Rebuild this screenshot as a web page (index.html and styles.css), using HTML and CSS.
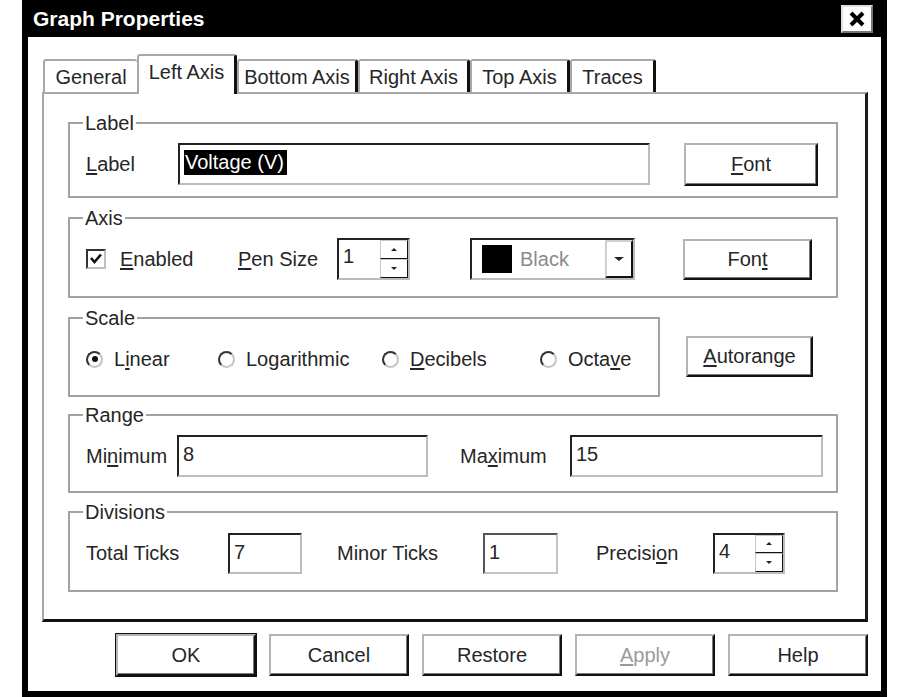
FILE: index.html
```html
<!DOCTYPE html>
<html lang="en">
<head>
  <meta charset="UTF-8" />
  <title>Graph Properties</title>
  <link rel="stylesheet" href="styles.css">
</head>
<body>
  <div class="window">
    <div class="titlebar">
      <span class="title">Graph Properties</span>
      <button class="close" aria-label="Close">
        <svg width="18" height="16" viewBox="0 0 18 16">
          <path d="M3 2 L15 14 M15 2 L3 14" stroke="#000" stroke-width="4" fill="none"/>
        </svg>
      </button>
    </div>

    <div class="content">
      <div class="tabs">
        <div class="tab tab-general">General</div>
        <div class="tab tab-left active">Left Axis</div>
        <div class="tab tab-bottom">Bottom Axis</div>
        <div class="tab tab-right">Right Axis</div>
        <div class="tab tab-top">Top Axis</div>
        <div class="tab tab-traces">Traces</div>
      </div>

      <div class="panel">
        <fieldset class="group group-label">
          <legend>Label</legend>
          <div class="row">
            <span class="lbl w-label"><u>L</u>abel</span>
            <div class="field field-label"><span class="selected">Voltage (V)</span></div>
            <button class="btn btn-font1"><u>F</u>ont</button>
          </div>
        </fieldset>

        <fieldset class="group group-axis">
          <legend>Axis</legend>
          <div class="row">
            <span class="check">
              <svg width="14" height="14" viewBox="0 0 14 14">
                <path d="M2 6 L5.5 10 L12 2.5" stroke="#111" stroke-width="2.6" fill="none"/>
              </svg>
            </span>
            <span class="lbl w-enabled"><u>E</u>nabled</span>
            <span class="lbl w-pen"><u>P</u>en Size</span>
            <div class="spin spin-pen">
              <span class="spin-text">1</span>
              <span class="spin-btns">
                <span class="spin-btn"><i class="arr-up"></i></span>
                <span class="spin-btn"><i class="arr-down"></i></span>
              </span>
            </div>
            <div class="combo">
              <span class="swatch"></span>
              <span class="combo-text">Black</span>
              <span class="drop"><i class="arr-drop"></i></span>
            </div>
            <button class="btn btn-font2">Fon<u>t</u></button>
          </div>
        </fieldset>

        <div class="scale-row">
          <fieldset class="group group-scale">
            <legend>Scale</legend>
            <div class="row">
              <span class="opt w-linear"><span class="radio on"></span>L<u>i</u>near</span>
              <span class="opt w-log"><span class="radio"></span>Lo<u>g</u>arithmic</span>
              <span class="opt w-dec"><span class="radio"></span><u>D</u>ecibels</span>
              <span class="opt"><span class="radio"></span>Octa<u>v</u>e</span>
            </div>
          </fieldset>
          <button class="btn btn-auto"><u>A</u>utorange</button>
        </div>

        <fieldset class="group group-range">
          <legend>Range</legend>
          <div class="row">
            <span class="lbl w-min">Mi<u>n</u>imum</span>
            <div class="field field-min">8</div>
            <span class="lbl w-max">Ma<u>x</u>imum</span>
            <div class="field field-max">15</div>
          </div>
        </fieldset>

        <fieldset class="group group-div">
          <legend>Divisions</legend>
          <div class="row">
            <span class="lbl w-total">Total Ticks</span>
            <div class="field field-small field-total">7</div>
            <span class="lbl w-minor">Minor Ticks</span>
            <div class="field field-small field-minor">1</div>
            <span class="lbl w-prec">Precisi<u>o</u>n</span>
            <div class="spin spin-prec">
              <span class="spin-text">4</span>
              <span class="spin-btns">
                <span class="spin-btn"><i class="arr-up"></i></span>
                <span class="spin-btn"><i class="arr-down"></i></span>
              </span>
            </div>
          </div>
        </fieldset>
      </div>

      <div class="actions">
        <button class="btn btn-main default">OK</button>
        <button class="btn btn-main">Cancel</button>
        <button class="btn btn-main">Restore</button>
        <button class="btn btn-main disabled"><u>A</u>pply</button>
        <button class="btn btn-main">Help</button>
      </div>
    </div>
  </div>
</body>
</html>
```

FILE: styles.css
```css
body {
  margin: 0;
  background: #fff;
  font-family: "Liberation Sans", Arial, sans-serif;
  font-size: 20px;
  color: #262626;
}
u {
  text-underline-offset: 2px;
}
.window {
  margin-left: 22px;
  width: 865px;
  height: 697px;
  box-sizing: border-box;
  border: 6px solid #000;
  border-top: 0;
  background: #fff;
}
.titlebar {
  height: 37px;
  background: #000;
  color: #fff;
  display: flex;
  align-items: center;
  justify-content: space-between;
  padding: 0 8px 0 5px;
}
.title {
  font-weight: bold;
  font-size: 21px;
}
.close {
  width: 32px;
  height: 28px;
  box-sizing: border-box;
  background: #fff;
  border: 2px solid;
  border-color: #e0e0e0 #777 #777 #e0e0e0;
  display: flex;
  align-items: center;
  justify-content: center;
  padding: 0;
}
.content {
  padding: 17px 13px 0 14px;
}

/* tabs */
.tabs {
  display: flex;
  align-items: flex-end;
  height: 38px;
  padding-left: 1px;
}
.tab {
  box-sizing: border-box;
  height: 33px;
  border: 2px solid #a8a8a8;
  border-bottom: 0;
  border-right: 3px solid #111;
  border-radius: 3px 3px 0 0;
  display: flex;
  align-items: center;
  justify-content: center;
  padding-top: 2px;
  background: #fff;
}
.tab.active {
  height: 40px;
  margin-bottom: -2px;
  position: relative;
  z-index: 1;
  padding-top: 0;
  padding-bottom: 6px;
}
.tab-general { width: 94px; border-right: 0; }
.tab-left { width: 100px; }
.tab-bottom { width: 121px; }
.tab-right { width: 112px; }
.tab-top { width: 100px; }
.tab-traces { width: 86px; }

.panel {
  box-sizing: border-box;
  height: 530px;
  border-top: 2px solid #a8a8a8;
  border-left: 2px solid #a8a8a8;
  border-right: 3px solid #1a1a1a;
  border-bottom: 3px solid #111;
  padding: 18px 27px 0 24px;
}

/* group boxes */
.group {
  margin: 0;
  min-width: 0;
  border: 2px solid #a2a2a2;
  padding: 9px 18px 16px 16px;
}
.group legend {
  padding: 0 2px;
  margin-left: -3px;
  line-height: 22px;
}
.group-label { padding-bottom: 11px; }
.group-axis { margin-top: 9px; }
.group-range { margin-top: 7px; padding-bottom: 14px; padding-right: 13px; }
.group-div { margin-top: 8px; }
.scale-row {
  display: flex;
  align-items: flex-start;
  margin-top: 9px;
}
.group-scale {
  width: 592px;
  box-sizing: border-box;
  padding-bottom: 15px;
}

.row {
  display: flex;
  align-items: center;
  height: 42px;
}
.lbl {
  flex: none;
  white-space: nowrap;
}
.w-label { width: 92px; }
.w-enabled { width: 118px; }
.w-pen { width: 99px; }
.w-min { width: 91px; }
.w-max { width: 110px; margin-left: 32px; }
.w-total { width: 142px; }
.w-minor { width: 146px; margin-left: 35px; }
.w-prec { width: 117px; margin-left: 38px; }

/* sunken edit fields */
.field {
  box-sizing: border-box;
  height: 42px;
  border: 2px solid;
  border-color: #222 #bcbcbc #bcbcbc #222;
  padding: 5px 4px;
  line-height: 24px;
  background: #fff;
  flex: none;
}
.field-label { width: 472px; }
.field-min { width: 251px; }
.field-max { width: 253px; }
.field-small { height: 41px; }
.field-total { width: 74px; }
.field-minor {
  width: 75px;
  border-color: #555 #c4c4c4 #c4c4c4 #555;
}
.selected {
  background: #000;
  color: #fff;
  padding: 0 3px 0 1px;
  display: inline-block;
  line-height: 25px;
}

/* push buttons */
.btn {
  box-sizing: border-box;
  height: 42px;
  background: #fff;
  font: inherit;
  color: #262626;
  border: 2px solid;
  border-color: #b4b4b4 #111 #111 #b4b4b4;
  box-shadow: inset -1px -1px 0 #7a7a7a;
  padding: 0;
  flex: none;
}
.btn-font1 { width: 134px; height: 43px; margin-left: 34px; }
.btn-font2 { width: 129px; height: 41px; margin-left: 48px; }
.btn-auto { width: 127px; height: 41px; margin-left: 26px; margin-top: 29px; }

/* checkbox and radios */
.check {
  box-sizing: border-box;
  width: 20px;
  height: 20px;
  border: 2px solid;
  border-color: #333 #c0c0c0 #c0c0c0 #333;
  margin-right: 14px;
  display: flex;
  align-items: center;
  justify-content: center;
  flex: none;
}
.opt {
  display: flex;
  align-items: center;
  flex: none;
  white-space: nowrap;
}
.w-linear { width: 132px; }
.w-log { width: 164px; }
.w-dec { width: 158px; }
.radio {
  box-sizing: border-box;
  width: 17px;
  height: 17px;
  border-radius: 50%;
  border: 2px solid;
  border-color: #333 #c4c4c4 #c4c4c4 #333;
  margin-right: 11px;
  display: flex;
  align-items: center;
  justify-content: center;
}
.radio.on::after {
  content: "";
  width: 6px;
  height: 6px;
  border-radius: 50%;
  background: #111;
}

/* spin boxes */
.spin {
  box-sizing: border-box;
  display: flex;
  height: 42px;
  border: 2px solid;
  border-color: #222 #bcbcbc #bcbcbc #222;
  flex: none;
}
.spin-pen { width: 73px; }
.spin-prec { width: 72px; height: 41px; }
.spin-text {
  flex: 1;
  padding: 4px 4px;
  line-height: 24px;
}
.spin-btns {
  width: 28px;
  display: flex;
  flex-direction: column;
  background: #222;
}
.spin-btn {
  flex: 1;
  box-sizing: border-box;
  background: #fff;
  border: 1px solid;
  border-color: #c8c8c8 #111 #111 #c8c8c8;
  display: flex;
  align-items: center;
  justify-content: center;
}
.arr-up {
  border: 3px solid transparent;
  border-bottom: 3px solid #222;
  border-top: 0;
}
.arr-down {
  border: 3px solid transparent;
  border-top: 3px solid #222;
  border-bottom: 0;
}

/* colour combo */
.combo {
  box-sizing: border-box;
  width: 165px;
  height: 42px;
  margin-left: 60px;
  display: flex;
  align-items: center;
  border: 2px solid;
  border-color: #222 #bcbcbc #bcbcbc #222;
  padding-left: 10px;
  flex: none;
}
.swatch {
  width: 30px;
  height: 28px;
  background: #000;
  margin-right: 8px;
}
.combo-text {
  flex: 1;
  color: #8a8a8a;
}
.drop {
  box-sizing: border-box;
  width: 28px;
  height: 100%;
  border: 2px solid;
  border-color: #d0d0d0 #111 #111 #d0d0d0;
  display: flex;
  align-items: center;
  justify-content: center;
}
.arr-drop {
  border: 5px solid transparent;
  border-top: 4px solid #222;
  border-bottom: 0;
}

/* dialog buttons */
.actions {
  display: flex;
  justify-content: flex-end;
  gap: 13px;
  margin-top: 12px;
}
.btn-main { width: 140px; }
.btn-main.default {
  outline: 1px solid #111;
}
.btn-main.disabled {
  color: #9a9a9a;
}
```
